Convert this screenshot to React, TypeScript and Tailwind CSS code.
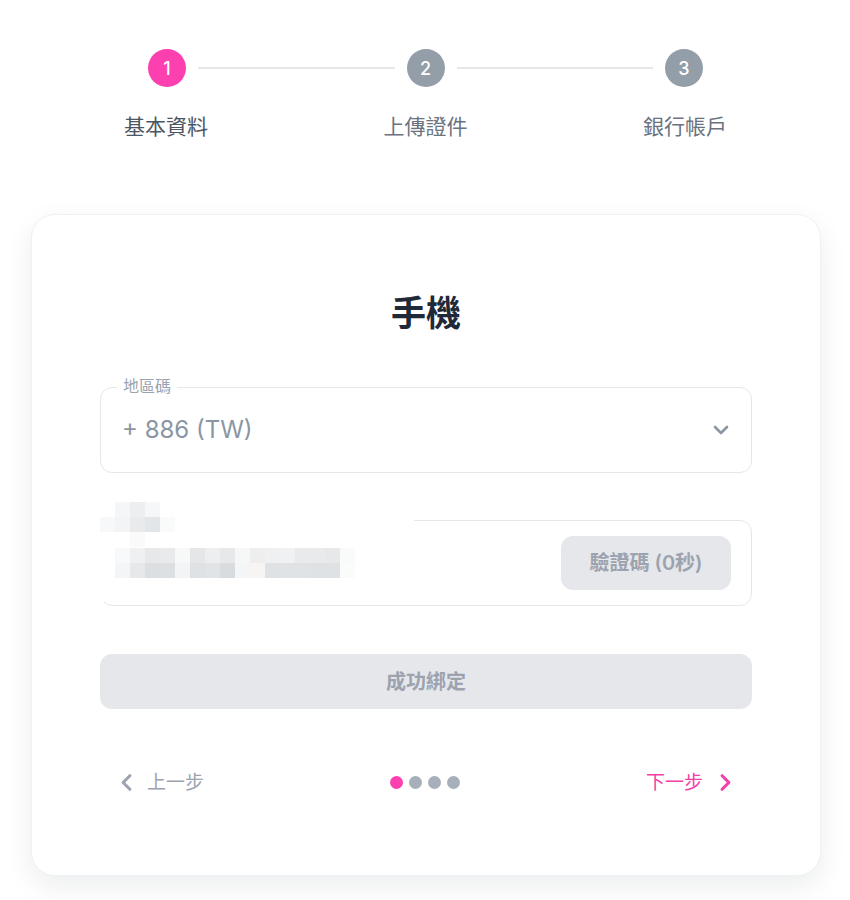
import { ChevronDown, ChevronLeft, ChevronRight } from 'lucide-react';

const steps = [
    { n: 1, label: '基本資料', active: true },
    { n: 2, label: '上傳證件', active: false },
    { n: 3, label: '銀行帳戶', active: false },
];

// pixelated (mosaic) legend over the phone field
const mosaic: [number, number, string][] = [
    [19, 4, '#f5f6f7'], [34, 4, '#eceef0'], [49, 4, '#f6f7f8'],
    [4, 19, '#f7f8f9'], [19, 19, '#f3f4f5'], [34, 19, '#e8eaec'], [49, 19, '#e3e6e8'], [64, 19, '#f9fafa'],
    [34, 34, '#fafafa'],
    [19, 50, '#f8f9fa'], [34, 50, '#eef0f1'], [49, 50, '#e6e8ea'], [64, 50, '#e8eaeb'], [79, 50, '#f7f8f8'],
    [94, 50, '#e4e6e8'], [109, 50, '#eceef0'], [124, 50, '#e6e8ea'], [139, 50, '#f6f7f7'], [154, 50, '#eeeeee'],
    [169, 50, '#eef0f1'], [184, 50, '#f0f1f2'], [199, 50, '#e8eaec'], [214, 50, '#e8eaec'], [229, 50, '#e6e8ea'],
    [244, 50, '#f9fafa'],
    [19, 65, '#f4f5f6'], [34, 65, '#e6e8ea'], [49, 65, '#dcdfe2'], [64, 65, '#dde0e2'], [79, 65, '#f3f4f5'],
    [94, 65, '#dfe2e4'], [109, 65, '#e1e4e6'], [124, 65, '#d9dcdf'], [139, 65, '#f4f5f6'], [154, 65, '#f6f5f3'],
    [169, 65, '#dfe2e5'], [184, 65, '#e0e3e5'], [199, 65, '#e0e3e5'], [214, 65, '#dfe2e4'], [229, 65, '#dfe2e4'],
    [244, 65, '#fafbfb'],
];

const App = () => {
    return (
        <div className="min-h-[900px] w-[850px] bg-white font-['Inter','Noto_Sans_CJK_TC',sans-serif]">
            {/* stepper */}
            <div className="pt-[49px] px-[124px] w-[851px]">
                <div className="flex items-center px-[24px]">
                    {steps.map((s, i) => (
                        <div key={s.n} className={i === 0 ? 'flex items-center' : 'flex items-center flex-1'}>
                            {i > 0 && <div className="flex-1 h-[2px] bg-[#e5e7eb] mx-[12px]"></div>}
                            <div
                                className={`w-[38px] h-[38px] rounded-full flex items-center justify-center text-white text-[18px] font-medium ${
                                    s.active ? 'bg-[#fd40b0]' : 'bg-[#939ea9]'
                                }`}
                            >
                                {s.n}
                            </div>
                        </div>
                    ))}
                </div>
                <div className="flex justify-between mt-[25px]">
                    {steps.map((s) => (
                        <span
                            key={s.n}
                            className={`text-[21px] leading-[30px] ${s.active ? 'text-[#4b5563]' : 'text-[#6b7280]'}`}
                        >
                            {s.label}
                        </span>
                    ))}
                </div>
            </div>

            {/* card */}
            <div className="ml-[31px] mt-[72px] w-[790px] h-[662px] bg-white rounded-[24px] border border-[#f0f1f3] shadow-[0_10px_28px_rgba(17,24,39,0.08)] px-[68px] pt-[75px]">
                <h2 className="text-center text-[35px] leading-[46px] font-semibold text-[#1f2937]">手機</h2>

                <div className="relative mt-[51px] h-[86px] border border-[#e5e7eb] rounded-[12px] flex items-center justify-between pl-[21px] pr-[18px]">
                    <span className="absolute -top-[13px] left-[16px] bg-white px-[6px] text-[16px] leading-[22px] text-[#9ca3af]">
                        地區碼
                    </span>
                    <span className="text-[24px] text-[#8a96a3]">+ 886 (TW)</span>
                    <ChevronDown className="w-[24px] h-[24px] text-[#8a96a3]" strokeWidth={2.6} />
                </div>

                <div className="relative mt-[47px] h-[86px] border border-[#e5e7eb] rounded-[12px] flex items-center justify-end pr-[20px]">
                    <div className="absolute -left-[5px] -top-[23px] w-[318px] h-[104px] bg-white">
                        <svg width="318" height="104" viewBox="0 0 318 104">
                            {mosaic.map(([x, y, c], i) => (
                                <rect key={i} x={x} y={y} width="15" height="15" fill={c} />
                            ))}
                        </svg>
                    </div>
                    <button className="w-[170px] h-[54px] rounded-[12px] bg-[#e5e7eb] text-[#9ca3af] text-[20px] font-semibold">
                        驗證碼 (0秒)
                    </button>
                </div>

                <button className="mt-[48px] w-full h-[55px] rounded-[12px] bg-[#e5e7eb] text-[#9ca3af] text-[20px] font-semibold">
                    成功綁定
                </button>

                <div className="mt-[60px] flex items-center justify-between px-[13px]">
                    <div className="flex items-center gap-[7px] text-[#9ca3af]">
                        <ChevronLeft className="w-[27px] h-[27px]" strokeWidth={2.8} />
                        <span className="text-[19px] leading-[24px]">上一步</span>
                    </div>
                    <div className="flex items-center gap-[6px]">
                        <span className="w-[13px] h-[13px] rounded-full bg-[#fd40b0]"></span>
                        <span className="w-[13px] h-[13px] rounded-full bg-[#a7b0ba]"></span>
                        <span className="w-[13px] h-[13px] rounded-full bg-[#a7b0ba]"></span>
                        <span className="w-[13px] h-[13px] rounded-full bg-[#a7b0ba]"></span>
                    </div>
                    <div className="flex items-center gap-[9px] text-[#f23fa9]">
                        <span className="text-[19px] leading-[24px]">下一步</span>
                        <ChevronRight className="w-[27px] h-[27px]" strokeWidth={2.8} />
                    </div>
                </div>
            </div>
        </div>
    );
};

export default App;
